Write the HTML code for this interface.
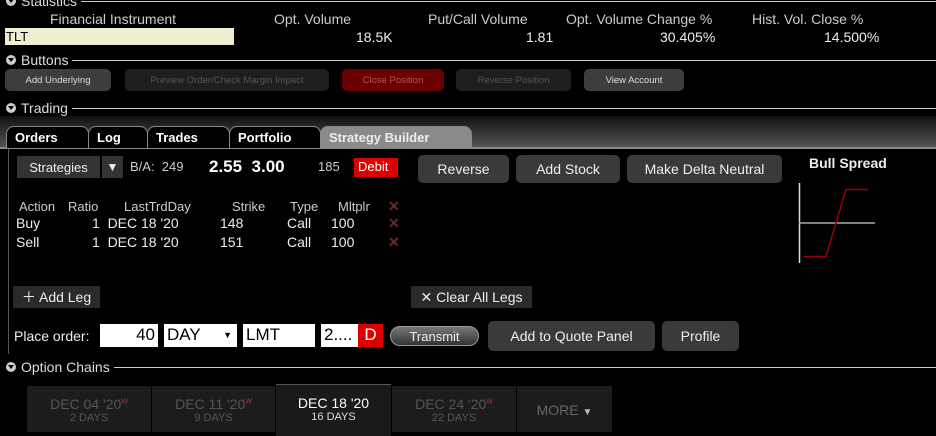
<!DOCTYPE html>
<html><head><style>
*{margin:0;padding:0;box-sizing:border-box}
body{width:936px;height:436px;background:#000;color:#ddd;font-family:"Liberation Sans",sans-serif;position:relative;overflow:hidden;font-size:14px}
.a{position:absolute;white-space:nowrap}
.sec{position:absolute;left:6px;font-size:14px;color:#ddd;display:flex;align-items:center;width:930px}
.sec i{display:inline-block;width:10px;height:10px;border-radius:50%;background:#ccc;margin-right:5px;position:relative}
.sec i:after{content:"";position:absolute;left:2px;top:3px;border-left:3px solid transparent;border-right:3px solid transparent;border-top:4px solid #000}
.sec span{flex:1;height:1px;background:#ccc;margin-left:4px}
.b{position:absolute;border-radius:5px;background:#3a3a3a;color:#eee;font-size:14px;display:flex;align-items:center;justify-content:center}
.sb{font-size:9.5px;color:#ddd}
.tab{position:absolute;top:126px;height:22px;border:1px solid #888;border-bottom:none;border-radius:8px 8px 0 0;background:#000;color:#fff;font-weight:bold;font-size:13px;padding:3px 0 0 8px}
.x{color:#6b2a2a;font-weight:bold}
.dt{position:absolute;top:386px;height:46px;background:#1c1c1c;text-align:center;color:#555;font-size:14px;padding-top:10px}
.dt small{display:block;font-size:11px;margin-top:0}
.in{position:absolute;top:324px;height:23px;background:#fff;color:#000;font-size:17px;padding:1px 3px}
</style></head><body>
<div class="sec" style="top:-7px"><i></i>Statistics<span></span></div>
<div class="a" style="left:50px;top:11px;color:#ccc">Financial Instrument</div>
<div class="a" style="left:274px;top:11px;color:#ccc">Opt. Volume</div>
<div class="a" style="left:428px;top:11px;color:#ccc">Put/Call Volume</div>
<div class="a" style="left:566px;top:11px;color:#ccc">Opt. Volume Change %</div>
<div class="a" style="left:752px;top:11px;color:#ccc">Hist. Vol. Close %</div>
<div class="a" style="left:5px;top:28px;width:229px;height:17px;background:#efefcf;color:#000;font-size:13px;padding:1px 1px">TLT</div>
<div class="a" style="left:356px;top:29px;color:#eee">18.5K</div>
<div class="a" style="left:526px;top:29px;color:#eee">1.81</div>
<div class="a" style="left:660px;top:29px;color:#eee">30.405%</div>
<div class="a" style="left:824px;top:29px;color:#eee">14.500%</div>

<div class="sec" style="top:52px"><i></i>Buttons<span></span></div>
<div class="b sb" style="left:5px;top:69px;width:106px;height:22px;background:#3d3d3d">Add Underlying</div>
<div class="b sb" style="left:125px;top:69px;width:204px;height:22px;background:#1e1e1e;color:#555">Preview Order/Check Margin Impact</div>
<div class="b sb" style="left:342px;top:69px;width:102px;height:22px;background:#6a0000;color:#b55">Close Position</div>
<div class="b sb" style="left:456px;top:69px;width:115px;height:22px;background:#1e1e1e;color:#555">Reverse Position</div>
<div class="b sb" style="left:584px;top:69px;width:100px;height:22px;background:#3d3d3d">View Account</div>

<div class="sec" style="top:100px"><i></i>Trading<span></span></div>
<div class="a" style="left:0;top:116px;width:936px;height:32px;background:linear-gradient(#111,#555)"></div>
<div class="a" style="left:0;top:147px;width:936px;height:2px;background:#888"></div>
<div class="tab" style="left:6px;width:83px">Orders</div>
<div class="tab" style="left:88px;width:60px">Log</div>
<div class="tab" style="left:147px;width:83px">Trades</div>
<div class="tab" style="left:229px;width:92px">Portfolio</div>
<div class="tab" style="left:320px;width:152px;background:#8a8a8a;color:#eee">Strategy Builder</div>
<div class="a" style="left:8px;top:149px;width:1px;height:205px;background:#555"></div>

<div class="b" style="left:17px;top:156px;width:83px;height:22px;border-radius:0;background:#333;font-size:13px">Strategies</div>
<div class="b" style="left:102px;top:156px;width:21px;height:22px;border-radius:0;background:#333;font-size:12px">▼</div>
<div class="a" style="left:130px;top:159px;font-size:13px;color:#ccc">B/A:&nbsp; 249</div>
<div class="a" style="left:209px;top:157px;font-size:17px;font-weight:bold;color:#fff">2.55&nbsp; 3.00</div>
<div class="a" style="left:318px;top:159px;font-size:13px;color:#ccc">185</div>
<div class="a" style="left:354px;top:158px;height:19px;width:44px;background:#d00;color:#fff;font-size:13px;padding:1px 4px">Debit</div>
<div class="b" style="left:418px;top:155px;width:91px;height:28px">Reverse</div>
<div class="b" style="left:516px;top:155px;width:104px;height:28px">Add Stock</div>
<div class="b" style="left:627px;top:155px;width:155px;height:28px">Make Delta Neutral</div>
<div class="a" style="left:809px;top:155px;font-size:14px;font-weight:bold;color:#eee">Bull Spread</div>
<svg class="a" style="left:795px;top:180px" width="90" height="90"><line x1="4.5" y1="3" x2="4.5" y2="83" stroke="#ddd" stroke-width="1.5"/><line x1="4" y1="43" x2="80" y2="43" stroke="#aaa" stroke-width="1.5"/><polyline points="9,76.5 31,76.5 51,9.5 73,9.5" fill="none" stroke="#900" stroke-width="1.5"/></svg>

<div class="a" style="left:19px;top:199px;font-size:13px;color:#ccc">Action</div>
<div class="a" style="left:68px;top:199px;font-size:13px;color:#ccc">Ratio</div>
<div class="a" style="left:124px;top:199px;font-size:13px;color:#ccc">LastTrdDay</div>
<div class="a" style="left:232px;top:199px;font-size:13px;color:#ccc">Strike</div>
<div class="a" style="left:290px;top:199px;font-size:13px;color:#ccc">Type</div>
<div class="a" style="left:338px;top:199px;font-size:13px;color:#ccc">Mltplr</div>
<div class="a x" style="left:388px;top:198px">✕</div>
<div class="a" style="left:16px;top:215px;font-size:14px;color:#eee">Buy</div>
<div class="a" style="left:92px;top:215px;font-size:14px;color:#eee">1&nbsp; DEC 18 '20</div>
<div class="a" style="left:220px;top:215px;font-size:14px;color:#eee">148</div>
<div class="a" style="left:287px;top:215px;font-size:14px;color:#eee">Call</div>
<div class="a" style="left:331px;top:215px;font-size:14px;color:#eee">100</div>
<div class="a x" style="left:388px;top:215px">✕</div>
<div class="a" style="left:16px;top:234px;font-size:14px;color:#eee">Sell</div>
<div class="a" style="left:92px;top:234px;font-size:14px;color:#eee">1&nbsp; DEC 18 '20</div>
<div class="a" style="left:220px;top:234px;font-size:14px;color:#eee">151</div>
<div class="a" style="left:287px;top:234px;font-size:14px;color:#eee">Call</div>
<div class="a" style="left:331px;top:234px;font-size:14px;color:#eee">100</div>
<div class="a x" style="left:388px;top:234px">✕</div>

<div class="b" style="left:13px;top:286px;width:87px;height:22px;border-radius:0;background:#2a2a2a">＋ Add Leg</div>
<div class="b" style="left:411px;top:286px;width:121px;height:22px;border-radius:0;background:#2a2a2a">✕ Clear All Legs</div>

<div class="a" style="left:14px;top:328px;font-size:14px;color:#eee">Place order:</div>
<div class="in" style="left:100px;width:58px;text-align:right">40</div>
<div class="in" style="left:164px;width:73px">DAY<span style="position:absolute;right:5px;top:6px;font-size:9px">▼</span></div>
<div class="in" style="left:243px;width:72px">LMT</div>
<div class="in" style="left:321px;width:37px">2....</div>
<div class="in" style="left:358px;width:25px;background:#d00;color:#fff;text-align:center">D</div>
<div class="b" style="left:390px;top:326px;width:89px;height:20px;border-radius:10px;background:linear-gradient(#777,#333);border:1px solid #999;font-size:13px">Transmit</div>
<div class="b" style="left:488px;top:321px;width:167px;height:30px">Add to Quote Panel</div>
<div class="b" style="left:662px;top:321px;width:77px;height:30px">Profile</div>

<div class="sec" style="top:359px"><i></i>Option Chains<span></span></div>
<div class="dt" style="left:27px;width:124px">DEC 04 '20<sup style="color:#a33;font-size:7px">W</sup><small>2 DAYS</small></div>
<div class="dt" style="left:152px;width:123px">DEC 11 '20<sup style="color:#a33;font-size:7px">W</sup><small>9 DAYS</small></div>
<div class="dt" style="left:276px;width:115px;top:384px;height:52px;background:#1a1a1a;color:#fff;border-top:1px solid #555">DEC 18 '20<small style="color:#ddd">16 DAYS</small></div>
<div class="dt" style="left:392px;width:124px">DEC 24 '20<sup style="color:#a33;font-size:7px">W</sup><small>22 DAYS</small></div>
<div class="dt" style="left:517px;width:95px;padding-top:16px;color:#666">MORE <span style="color:#bbb;font-size:10px">▼</span></div>
</body></html>
